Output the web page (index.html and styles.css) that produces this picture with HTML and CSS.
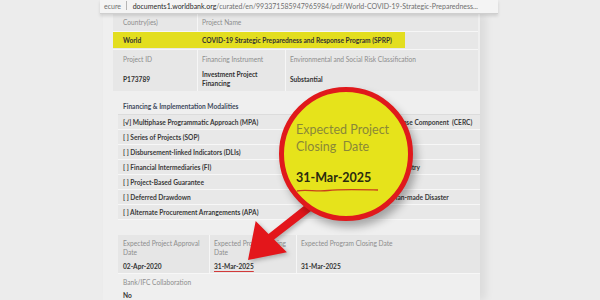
FILE: index.html
```html
<!DOCTYPE html>
<html lang="en">
<head>
    <meta charset="UTF-8">
    <title>World COVID-19 SPRP</title>
    <link rel="stylesheet" href="styles.css">
</head>
<body>
    <div class="screen">
        <div class="urlbar">
            <span class="url-muted">ecure</span>
            <span class="url-sep"></span>
            <span class="url-host">documents1.worldbank.org</span><span class="url-muted">/curated/en/993371585947965984/pdf/World-COVID-19-Strategic-Preparedness...</span>
        </div>

        <div class="page">
            <div class="summary">
                <div class="row row-head">
                    <div class="cell c1 label">Country(ies)</div>
                    <div class="cell c2 label">Project Name</div>
                </div>
                <div class="row row-mark">
                    <div class="mark">
                        <div class="cell c1 value">World</div>
                        <div class="cell c2 value">COVID-19 Strategic Preparedness and Response Program (SPRP)</div>
                    </div>
                </div>
                <div class="row row-info">
                    <div class="cell c1">
                        <div class="label">Project ID</div>
                        <div class="value info-value">P173789</div>
                    </div>
                    <div class="cell c2 sep">
                        <div class="label">Financing Instrument</div>
                        <div class="value">Investment Project<br>Financing</div>
                    </div>
                    <div class="cell c3 sep">
                        <div class="label">Environmental and Social Risk Classification</div>
                        <div class="value info-value">Substantial</div>
                    </div>
                </div>
            </div>

            <div class="modalities">
                <div class="mod-head">Financing &amp; Implementation Modalities</div>
                <div class="mod-row"><span class="mod-left">[&radic;] Multiphase Programmatic Approach (MPA)</span><span class="mod-right">[ ] Contingent Emergency Response Component &nbsp;(CERC)</span></div>
                <div class="mod-row"><span class="mod-left">[ ] Series of Projects (SOP)</span><span class="mod-right">[ ] Fragile State(s)</span></div>
                <div class="mod-row"><span class="mod-left">[ ] Disbursement-linked Indicators (DLIs)</span><span class="mod-right">[ ] Small State(s)</span></div>
                <div class="mod-row"><span class="mod-left">[ ] Financial Intermediaries (FI)</span><span class="mod-right">[ ] Fragile within a non-fragile Country</span></div>
                <div class="mod-row"><span class="mod-left">[ ] Project-Based Guarantee</span><span class="mod-right">[ ] Conflict</span></div>
                <div class="mod-row"><span class="mod-left">[ ] Deferred Drawdown</span><span class="mod-right">[ ] Responding to Natural or Man-made Disaster</span></div>
                <div class="mod-row"><span class="mod-left">[ ] Alternate Procurement Arrangements (APA)</span><span class="mod-right"></span></div>
            </div>

            <div class="dates">
                <div class="date-row">
                    <div class="date-cell d1">
                        <div class="label">Expected Project Approval<br>Date</div>
                        <div class="value">02-Apr-2020</div>
                    </div>
                    <div class="date-cell d2">
                        <div class="label">Expected Project Closing<br>Date</div>
                        <div class="value underlined">31-Mar-2025</div>
                    </div>
                    <div class="date-cell d3">
                        <div class="label">Expected Program Closing Date</div>
                        <div class="value date-late">31-Mar-2025</div>
                    </div>
                </div>
                <div class="collab">
                    <div class="label">Bank/IFC Collaboration</div>
                    <div class="value">No</div>
                </div>
            </div>
        </div>

        <!-- callout arrow + magnifier -->
        <svg class="arrow" width="90" height="80" viewBox="0 0 90 80">
            <polygon points="79,-1 28.5,38.9 15.7,26.1 8,65 46.9,57.3 34.1,44.5 84,6" fill="#e3161b"/>
        </svg>

        <div class="callout">
            <div class="callout-label">Expected Project<br>Closing&nbsp; Date</div>
            <div class="callout-date">31-Mar-2025</div>
            <svg class="scribble" width="84" height="6" viewBox="0 0 84 6">
                <path d="M1 4 C 10 2, 20 5, 32 3.5 S 60 2.5, 82 3" stroke="#c9401c" stroke-width="1.3" fill="none"/>
            </svg>
        </div>
    </div>
</body>
</html>
```

FILE: styles.css
```css
body {
    margin: 0;
    background-color: #ececec;
    font-family: 'Lato', 'Liberation Sans', sans-serif;
}

.screen {
    position: relative;
    width: 600px;
    height: 300px;
    overflow: hidden;
}

.urlbar {
    margin-left: 100px;
    width: 394px;
    height: 13px;
    padding-left: 4px;
    background-color: #f4f4f4;
    border-bottom: 1px solid #cfcfcf;
    box-shadow: 0 2px 3px rgba(0,0,0,0.12);
    font-size: 7px;
    line-height: 13px;
    white-space: nowrap;
    overflow: hidden;
    position: relative;
    z-index: 1;
}

.url-muted {
    color: #6f6f6f;
}

.url-host {
    color: #2a2a2a;
}

.url-sep {
    display: inline-block;
    width: 1px;
    height: 9px;
    margin: 0 4px 0 3px;
    background-color: #b5b5b5;
    vertical-align: -1px;
}

.page {
    margin-left: 103px;
    width: 367px;
    height: 286px;
    padding-left: 10px;
    background-color: #efefef;
    box-shadow: 6px 0 8px rgba(0,0,0,0.07);
    font-size: 6.6px;
}

.label {
    color: #8d8d8d;
}

.value {
    color: #333;
    font-weight: 700;
}

/* project summary table */
.summary {
    width: 365px;
    background-color: #e7e7e7;
}

.row {
    display: flex;
    border-bottom: 1px solid #f6f6f6;
}

.cell {
    box-sizing: border-box;
    padding-left: 10px;
}

.c1 {
    width: 84px;
}

.c2 {
    width: 88px;
}

.c3 {
    flex: 1;
}

.sep {
    border-left: 1px solid #f6f6f6;
}

.row-head {
    height: 17px;
    line-height: 17px;
}

.row-head .c2 {
    border-left: 1px solid #f6f6f6;
    padding-left: 4px;
}

.row-mark {
    height: 17px;
}

.mark {
    display: flex;
    width: 292px;
    height: 16px;
    line-height: 16px;
    background-color: #e3de1f;
}

.mark .c2 {
    width: auto;
    padding-left: 5px;
    white-space: nowrap;
}

.row-info {
    height: 41px;
    border-bottom: none;
}

.row-info .cell {
    padding-top: 5px;
    line-height: 9px;
}

.row-info .c2,
.row-info .c3 {
    padding-left: 4px;
}

.row-info .value {
    margin-top: 6px;
}

.row-info .info-value {
    margin-top: 11px;
}

/* modalities */
.modalities {
    margin: 7px 0 0 5px;
    width: 362px;
}

.mod-head {
    height: 16px;
    line-height: 17px;
    padding-left: 5px;
    color: #3e4a5c;
    font-weight: 700;
    border-bottom: 1px solid #dcdcdc;
}

.mod-row {
    display: flex;
    height: 14px;
    line-height: 15px;
    background-color: #e8e8e8;
    border-bottom: 1px solid #f7f7f7;
    color: #3a3a3a;
    font-weight: 700;
    white-space: nowrap;
}

.mod-left {
    width: 182px;
    padding-left: 5px;
}

.mod-right {
    flex: 1;
    padding-left: 4px;
}

/* dates */
.dates {
    margin: 15px 0 0 5px;
    width: 362px;
}

.date-row {
    display: flex;
    height: 38px;
    background-color: #e6e6e6;
    border-bottom: 1px solid #f7f7f7;
}

.date-cell {
    box-sizing: border-box;
    padding: 4px 0 0 5px;
    line-height: 9px;
}

.d1 {
    width: 91px;
}

.d2 {
    width: 87px;
    border-left: 1px solid #f6f6f6;
    padding-left: 4px;
}

.d3 {
    flex: 1;
    border-left: 1px solid #f6f6f6;
    padding-left: 4px;
}

.date-cell .value {
    margin-top: 5px;
}

.date-cell .date-late {
    margin-top: 14px;
}

.underlined {
    text-decoration: underline;
    text-decoration-color: #d23a3a;
    text-underline-offset: 2px;
}

.collab {
    padding: 4px 0 0 5px;
    line-height: 9px;
}

.collab .value {
    margin-top: 4px;
}

/* callout overlay */
.arrow {
    position: absolute;
    left: 240px;
    top: 195px;
    filter: drop-shadow(2px 2px 2px rgba(0,0,0,0.25));
}

.callout {
    position: absolute;
    left: 279px;
    top: 87px;
    width: 134px;
    height: 134px;
    box-sizing: border-box;
    padding: 29px 0 0 12px;
    border: 5px solid #e0191c;
    border-radius: 50%;
    background-color: #e6e31b;
    box-shadow: 4px 6px 9px rgba(0,0,0,0.3);
    white-space: nowrap;
}

.callout-label {
    color: #8a8838;
    font-size: 12.5px;
    line-height: 17px;
}

.callout-date {
    margin-top: 14px;
    color: #2a2a10;
    font-size: 12.5px;
    font-weight: 700;
    line-height: 17px;
}

.scribble {
    display: block;
    margin-top: 1px;
}
```
